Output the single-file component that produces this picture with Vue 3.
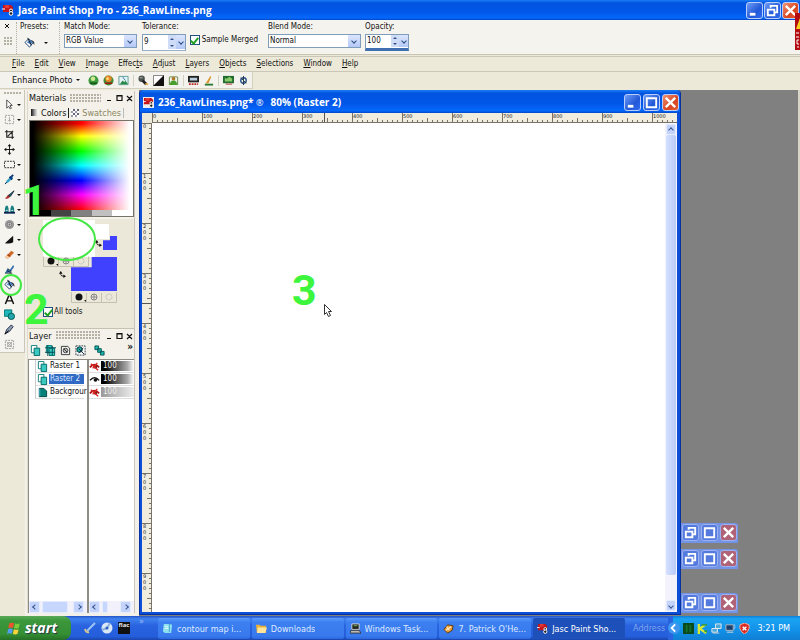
<script setup>
import { ref } from 'vue'

const menus = ['File', 'Edit', 'View', 'Image', 'Effects', 'Adjust', 'Layers', 'Objects', 'Selections', 'Window', 'Help']
const accel = { Effects: 5, Adjust: 0 }
const menuParts = menus.map((m) => {
  const i = accel[m] ?? 0
  return { name: m, a: m.slice(0, i), u: m[i], b: m.slice(i + 1) }
})

const matchMode = ref('RGB Value')
const blendMode = ref('Normal')
const tolerance = ref('9')
const opacity = ref('100')
const sampleMerged = ref(true)
const allTools = ref(true)

const layerShape = (front, back) =>
  `<path d="M1.5 .5h6v8h-6z" fill="${back}" stroke="#087a78"/><path d="M4.5 3.5h6v8h-6z" fill="${front}" stroke="#066"/>`

const icons = {
  logo: '<path d="M1 1h8l2 2v5H1z" fill="#c3151b"/><path d="M0 5h3" stroke="#fff"/><path d="M3 1h4v3H3z" fill="#e43a35"/><circle cx="9" cy="6.500" r="1.500" fill="#222" stroke="#fff"/><circle cx="9" cy="9.500" r="1.800" fill="#222" stroke="#fff"/>',
  bucket: '<path d="M1 6l4-4 5 4-4 5z" fill="#fff" stroke="#123a6e"/><path d="M3 6l3-3 4 3-3 2z" fill="#4c86c8"/><path d="M4 1l4 8M8 4q3 0 3 4" fill="none" stroke="#111"/>',
  arrow: '<path d="M3 1v9l2-2 2 3 1-1-1.500-3H9z" fill="#fff" stroke="#444"/>',
  deform: '<path d="M1.500 1.500h9v9h-9z" fill="none" stroke="#999" stroke-dasharray="2 1"/><path d="M6 3v5M4.500 6.500L6 8l1.500-1.500" fill="none" stroke="#aaa"/>',
  crop: '<path d="M3 1v8h8M1 3h8v8M4 8l6-6" fill="none" stroke="#222" stroke-width="1.200"/>',
  move: '<path d="M6 1v10M1 6h10" stroke="#111"/><path d="M6 0l2 2.500H4zM6 12l2-2.500H4zM0 6l2.500-2v4zM12 6L9.500 4v4z" fill="#111"/>',
  marquee: '<path d="M.5 2.500h11v7H.5z" fill="none" stroke="#222" stroke-dasharray="2 1"/>',
  dropper: '<path d="M1 11l2-4 5-5 2 2-5 5z" fill="#36a3c4"/><path d="M6 3l3 3M7 4l3-3" stroke="#113a7c" stroke-width="2"/><path d="M1 11l2-2" stroke="#114"/>',
  brush: '<path d="M1 10q4 2 6-2L4.500 6Q3 9 1 10z" fill="#a33"/><path d="M5 7l6-5-4 6z" fill="#187d88" stroke="#123"/>',
  clone: '<path d="M1 10V5l1-3h2l1 3v5zM7 10V5l1-3h2l1 3v5z" fill="#167f81"/><path d="M0 9.500h12" stroke="#125" stroke-width="2"/><path d="M2 7h2M8 7h2" stroke="#eee"/>',
  target: '<circle cx="6" cy="6" r="5" fill="#999"/><circle cx="6" cy="6" r="2.500" fill="#ccc" stroke="#777"/><circle cx="6" cy="6" r="1" fill="#666"/>',
  dodge: '<path d="M1 10l9-8v7q-3 2-9 1z" fill="#111"/>',
  eraser: '<path d="M1 9l7-7 3 2-7 7z" fill="#d06a2b"/><path d="M1 9l3 2 2-2-3-2z" fill="#f5cfaa"/><path d="M4 6l3 2" stroke="#8a3011"/>',
  picture: '<path d="M1 10l3-5 2 2 4-6 1 2-4 6z" fill="#2f6dab"/><path d="M3 7l5 3M4 5l4 3" stroke="#123"/><path d="M1 10h8" stroke="#244"/>',
  text: '<path d="M1.500 11L5.500 1h1l4 10M3 7.500h6" fill="none" stroke="#111" stroke-width="1.600"/>',
  shapes: '<path d="M.5 1h8v7h-8z" fill="#21b8bb" stroke="#077"/><circle cx="8" cy="8" r="3.500" fill="#22a6a8" stroke="#055"/>',
  pen: '<path d="M1 11l2-5 5-5 2 2-4 5z" fill="#8ba2b5" stroke="#224"/><path d="M1 11l4-4" stroke="#111"/>',
  object: '<path d="M1.500 1.500h9v9h-9z" fill="none" stroke="#999" stroke-dasharray="2 1"/><path d="M3 3l6 6M9 3L3 9M4 4h4v4H4z" fill="none" stroke="#aaa"/>',
  layer: layerShape('#39c9bf', '#fff'),
  layerBack: '<path d="M2.500 1.500h5l3 3v6h-8z" fill="#078078" stroke="#044"/><path d="M3 2v8" stroke="#4bc"/>',
  layerDelete: layerShape('#39c9bf', '#39c9bf') + '<path d="M0 3h12M3 0v12M0 8h11M8 1v10" stroke="#064f55"/>',
  mask: '<path d="M1.500 1.500h7l2 2v7h-9z" fill="#eee" stroke="#333"/><circle cx="6" cy="6" r="2.500" fill="#bbb" stroke="#444"/><path d="M4 4l4 4" stroke="#333"/>',
  layerEdit: '<path d="M1 1h10v10H1z" fill="#fff" stroke="#234" stroke-dasharray="2 1"/><circle cx="5" cy="5" r="3" fill="#25afa9" stroke="#033"/><path d="M4 4l6 6M9 3L4 9" stroke="#123"/>',
  layerLink: '<path d="M1 1h4v4H1zM4 4h4v4H4zM7 7h4v4H7z" fill="#1fb2a8" stroke="#055"/>',
  eye: '<path d="M1 7q5-6 10 0" fill="none" stroke="#111" stroke-width="1.500"/><circle cx="7" cy="6.500" r="2" fill="#111"/>',
  eyeOff: '<path d="M1 7q5-6 10 0" fill="none" stroke="#a11" stroke-width="2"/><circle cx="7" cy="6.500" r="2" fill="#722"/><path d="M2 3l8 7M9 2L4 8" stroke="#d22" stroke-width="1.500"/>',
  ball: '<circle cx="6" cy="6" r="5.500" fill="#3c9a3c"/><circle cx="5.500" cy="4" r="2.500" fill="#d0e896"/><path d="M2 9h8" stroke="#175c1c" stroke-width="2"/>',
  ballRed: '<circle cx="6" cy="6" r="5.500" fill="#3f8a34"/><circle cx="6" cy="4" r="3.500" fill="#e8862c"/><circle cx="5" cy="4" r="1.500" fill="#ffe06a"/><path d="M2 9h8" stroke="#a11" stroke-width="1.500"/>',
  photo: '<path d="M1 1.500h10v9H1z" fill="#e4f3f5" stroke="#5b9a91"/><path d="M2 10l3-4 2 2 1-2 3 4z" fill="#278a45"/><path d="M5 2l3 4" stroke="#37a"/>',
  clean: '<circle cx="4" cy="4" r="3.500" fill="#4b5550"/><path d="M5 6l4 4" stroke="#222" stroke-width="3"/><path d="M8 9h3v2H8z" fill="#e5b34f"/><path d="M2 3h3" stroke="#bbb"/>',
  contrast: '<path d="M.5 .5h11v11H.5z" fill="#fff" stroke="#777"/><path d="M12 0v12H0z" fill="#111"/>',
  person: '<path d="M1.500 11V2M10.500 11V2M2 2h8" fill="none" stroke="#5d8a43"/><circle cx="6" cy="4" r="2" fill="#b07c2a"/><path d="M2 11q0-5 4-5t4 5z" fill="#4a9e2b"/>',
  film: '<path d="M0 1h12v7H0z" fill="#222"/><path d="M2 3h8v3H2z" fill="#bcd"/><path d="M1 10h10" stroke="#b22" stroke-width="2" stroke-dasharray="2 1"/>',
  sharpen: '<path d="M3 9l5-8 1 1-3 7z" fill="#d9972c"/><path d="M2 10.500h9" stroke="#2a7a32" stroke-width="2"/>',
  landscape: '<path d="M0 1h12v8H0z" fill="#236c2f"/><path d="M2 3l2 1 3-2 3 2v3H2z" fill="#88c96a"/><path d="M3 10h7" stroke="#b33"/>',
  gear: '<circle cx="6" cy="6" r="3" fill="none" stroke="#26538b" stroke-width="1.500"/><path d="M6 1v10M3 3l6 6" stroke="#234"/>',
  flag: '<path d="M2 2q3-1 4 0L5 6Q3 5 1 6z" fill="#f0542c"/><path d="M7 2q2 1 4 0l-1 4q-2 1-4 0z" fill="#7ccb3a"/><path d="M1 7q2-1 4 0l-1 4q-2-1-4 0z" fill="#4f9cf0"/><path d="M6 7q2 1 4 0l-1 4q-2 1-4 0z" fill="#fbd33c"/>',
  check: '<path d="M3 9l8-8" fill="none" stroke="#9fc6f5" stroke-width="2"/><path d="M1 7q1 4 4 3" fill="none" stroke="#d3c38f" stroke-width="2"/>',
  disc: '<circle cx="6" cy="6" r="5.500" fill="#d8e6f5"/><path d="M6 6L9 1M6 6l-5 2" stroke="#8eb2dd" stroke-width="2"/><circle cx="6" cy="6" r="1.500" fill="#2b62c0"/>',
  note: '<path d="M2 1h6l3 1-1 9H3L1 9z" fill="#8fe0ef"/><path d="M8 1v9" stroke="#3aa0c8"/><path d="M3 4h4M3 6h4" stroke="#e6fbff"/>',
  folder: '<path d="M0 2h4l1 1h6v8H1z" fill="#e8b13a"/><path d="M2 5h10l-2 6H1z" fill="#ffe59a"/>',
  computer: '<path d="M2 1h8v6H2z" fill="#222" stroke="#ddd"/><path d="M4 3h4" stroke="#7c6"/><path d="M1 8h9l2 3H0z" fill="#bbb" stroke="#333"/>',
  globe: '<path d="M1 7l4-5 6 1-1 5-5 3z" fill="#e9962a" stroke="#5c3a16"/><path d="M3 8l6-4M4 4l3 4" stroke="#ffe5b5" stroke-width="1.500"/>',
  meter: '<path d="M0 0h12v12H0z" fill="#0a4a1d"/><path d="M3 2h2v8H3zM7 2h2v8H7z" fill="#15712c"/>',
  kay: '<path d="M2 1v11M9 2L3 6l7 5" fill="none" stroke="#d9e935" stroke-width="2.500"/><path d="M5 2h6M8 9h3" stroke="#369b49" stroke-width="2"/>',
  network: '<path d="M5 1h6v5H5zM1 6h6v4H1z" fill="#48a8d8" stroke="#eee"/><path d="M2 11h7" stroke="#ccc"/>',
  monitor: '<path d="M1 2h8v6H1z" fill="#1b4070" stroke="#bbb"/><path d="M2 10h7" stroke="#ddd"/><path d="M10 1q2 3 0 6" fill="none" stroke="#8cc6ff"/>',
  shield: '<path d="M6 0l5 2v4q-1 4-5 6-4-2-5-6V2z" fill="#d92b22" stroke="#f7b0a0"/><path d="M4 4l4 4M8 4L4 8" stroke="#fff" stroke-width="1.500"/>',
}

const enhance = [['ball', 'ballRed', 'photo'], ['clean', 'contrast', 'person'], ['film', 'sharpen'], ['landscape', 'gear']]
const tools = [
  ['arrow', true], ['deform', true], ['crop'], ['move'], ['marquee', true], ['dropper', true], ['brush', true],
  ['clone', true], ['target', true], ['dodge', true], ['eraser', true], ['picture'], ['bucket'], ['text'],
  ['shapes'], ['pen'], ['object'],
]
const layerTools = ['layer', 'layerDelete', 'mask', 'layerEdit', 'layerLink']
const layers = [
  { name: 'Raster 1', icon: 'layer', eye: 'eyeOff', opacity: '100' },
  { name: 'Raster 2', icon: 'layer', eye: 'eye', opacity: '100', selected: true },
  { name: 'Backgrour', icon: 'layerBack', eye: 'eyeOff', opacity: '100', locked: true },
]
const tasks = [
  { text: 'contour map i...', icon: 'note' },
  { text: 'Downloads', icon: 'folder' },
  { text: 'Windows Task...', icon: 'computer' },
  { text: "7. Patrick O'He...", icon: 'globe' },
  { text: 'Jasc Paint Sho...', icon: 'logo', active: true },
]
const tray = ['meter', 'kay', 'network', 'monitor', 'shield']
const ticks = Array.from({ length: 105 }, (_, i) => ({ at: i * 5, len: i % 10 === 0 ? 10 : i % 5 === 0 ? 5 : 3 }))
const marks = Array.from({ length: 11 }, (_, i) => ({ at: i * 50, label: String(i * 100) }))
const minimized = ['a', 'b', 'c']
</script>

<template>
  <div class="app">
    <header class="titlebar">
      <svg class="icon big" viewBox="0 0 12 12" v-html="icons.logo"></svg>
      <h1>Jasc Paint Shop Pro - 236_RawLines.png</h1>
      <div class="winbtns">
        <button class="wb" aria-label="Minimize"><svg viewBox="0 0 16 16"><path d="M3 12h6" stroke="#fff" stroke-width="3" /></svg></button>
        <button class="wb" aria-label="Restore"><svg viewBox="0 0 16 16"><path d="M6 5V3h7v7h-2M3 7h7v6H3z" fill="none" stroke="#fff" stroke-width="2" /></svg></button>
        <button class="wb close" aria-label="Close"><svg viewBox="0 0 16 16"><path d="M3 3l10 10M13 3L3 13" stroke="#fff" stroke-width="2.500" /></svg></button>
      </div>
    </header>

    <section class="options">
      <div class="grab"><button class="plain" aria-label="Close palette"><svg class="tiny" viewBox="0 0 6 6"><path d="M1 1l4 4M5 1L1 5" stroke="#111" /></svg></button><span class="dots"></span></div>
      <div class="field presets">
        <span>Presets:</span>
        <button class="plain preset" aria-label="Presets"><svg class="icon" viewBox="0 0 12 12" v-html="icons.bucket"></svg><i class="caret"></i></button>
      </div>
      <div class="field match">
        <label for="mm">Match Mode:</label>
        <div class="combo"><select id="mm" v-model="matchMode"><option>RGB Value</option></select><span class="drop"><i class="chev"></i></span></div>
      </div>
      <div class="field num">
        <label for="tol">Tolerance:</label>
        <div class="spin low"><input id="tol" v-model="tolerance" type="text"><span class="updown"><i class="up"></i><i class="down"></i></span><span class="drop"><i class="chev"></i></span></div>
      </div>
      <label class="tick merged"><input v-model="sampleMerged" type="checkbox">Sample Merged</label>
      <div class="field blend">
        <label for="bm">Blend Mode:</label>
        <div class="combo"><select id="bm" v-model="blendMode"><option>Normal</option></select><span class="drop"><i class="chev"></i></span></div>
      </div>
      <div class="field num">
        <label for="op">Opacity:</label>
        <div class="spin"><input id="op" v-model="opacity" type="text"><span class="updown"><i class="up"></i><i class="down"></i></span><span class="drop"><i class="chev"></i></span></div>
      </div>
    </section>

    <nav class="menubar">
      <button v-for="m in menuParts" :key="m.name" class="plain">{{ m.a }}<u>{{ m.u }}</u>{{ m.b }}</button>
    </nav>

    <div class="toolbar">
      <div class="strip">
        <button class="plain enhance">Enhance Photo<i class="caret"></i></button>
        <div v-for="(g, i) in enhance" :key="i" class="group">
          <button v-for="n in g" :key="n" class="plain" :aria-label="n"><svg class="icon" viewBox="0 0 12 12" v-html="icons[n]"></svg></button>
        </div>
      </div>
    </div>

    <main class="work">
      <aside class="toolbox">
        <span class="dots"></span>
        <button v-for="t in tools" :key="t[0]" class="plain tool" :aria-label="t[0]">
          <svg class="icon" viewBox="0 0 12 12" v-html="icons[t[0]]"></svg><i v-if="t[1]" class="caret"></i>
        </button>
      </aside>

      <aside class="panels">
        <section class="panel">
          <header class="phead">
            <h2>Materials</h2><span class="dots"></span>
            <svg class="pctl" viewBox="0 0 28 8"><path d="M2 6.500h4M12 1.500h5v5h-5zM11.500 2h6M22 2l5 5M27 2l-5 5" fill="none" stroke="#111" stroke-width="1.200" /></svg>
          </header>
          <div class="tabs">
            <button class="plain tab on"><i class="tone"></i>Colors</button>
            <button class="plain tab"><i class="checker"></i>Swatches</button>
          </div>
          <div class="rainbow"><div class="hues"></div><div class="greys"><i></i><i></i><i></i><i></i></div></div>
          <div class="swatches">
            <button class="sw fore" aria-label="Foreground material"></button>
            <button class="sw minifore" aria-label="Foreground color"></button>
            <button class="sw miniback" aria-label="Background color"></button>
            <button class="sw back" aria-label="Background material"></button>
            <svg class="swap one" viewBox="0 0 8 8"><path d="M2 1v3q0 2 4 2" fill="none" stroke="#111" /><path d="M0 3l2-3 2 3zM5 4l3 2-3 2z" fill="#111" /></svg>
            <svg class="swap two" viewBox="0 0 8 8"><path d="M2 1v3q0 2 4 2" fill="none" stroke="#111" /><path d="M0 3l2-3 2 3zM5 4l3 2-3 2z" fill="#111" /></svg>
            <svg v-for="n in ['first', 'second']" :key="n" class="modes" :class="n" viewBox="0 0 46 11">
              <path d="M.5 .5v10h45V.5M15.500 1v9M30.500 1v9" fill="none" stroke="#c3bfb1" />
              <circle cx="8" cy="5" r="3.500" fill="#111" /><path d="M13 8h2v2z" fill="#111" />
              <circle cx="23" cy="5" r="3" fill="none" stroke="#888" /><path d="M23 2v6M20 5h6" stroke="#888" />
              <circle cx="38" cy="5" r="3" fill="none" stroke="#bbb" stroke-dasharray="2 1" />
            </svg>
          </div>
          <label class="tick all"><input v-model="allTools" type="checkbox">All tools</label>
        </section>

        <section class="panel layers">
          <header class="phead">
            <h2>Layer</h2><span class="dots"></span>
            <svg class="pctl" viewBox="0 0 28 8"><path d="M2 6.500h4M12 1.500h5v5h-5zM11.500 2h6M22 2l5 5M27 2l-5 5" fill="none" stroke="#111" stroke-width="1.200" /></svg>
          </header>
          <div class="ltools">
            <button v-for="n in layerTools" :key="n" class="plain" :aria-label="n"><svg class="icon" viewBox="0 0 12 12" v-html="icons[n]"></svg></button>
            <b>»</b>
          </div>
          <div class="panes">
            <div class="pane names">
              <ul>
                <li v-for="l in layers" :key="l.name"><svg class="icon" viewBox="0 0 12 12" v-html="icons[l.icon]"></svg><span :class="{ sel: l.selected }">{{ l.name }}</span></li>
              </ul>
              <div class="hscroll"><i class="arr left"></i><i class="thumb"></i><i class="arr right"></i></div>
            </div>
            <div class="pane vis">
              <ul>
                <li v-for="l in layers" :key="l.name"><svg class="icon" viewBox="0 0 12 12" v-html="icons[l.eye]"></svg><span class="op" :class="{ locked: l.locked }">{{ l.opacity }}</span></li>
              </ul>
              <div class="hscroll"><i class="arr left"></i><i class="thumb small"></i><i class="arr right"></i></div>
            </div>
          </div>
        </section>
      </aside>

      <section class="mdi">
        <article class="doc">
          <header class="titlebar dochead">
            <svg class="icon" viewBox="0 0 12 12"><path d="M0 0h12v12H0z" fill="#eee" /><g v-html="icons.logo"></g></svg>
            <h2>236_RawLines.png* <small>®</small></h2><h2 class="zoom">80% (Raster 2)</h2>
            <div class="winbtns">
              <button class="wb" aria-label="Minimize"><svg viewBox="0 0 16 16"><path d="M3 12h6" stroke="#fff" stroke-width="3" /></svg></button>
              <button class="wb" aria-label="Maximize"><svg viewBox="0 0 16 16"><path d="M2 3.500h12M3 4v9h10V4" fill="none" stroke="#fff" stroke-width="2" /></svg></button>
              <button class="wb close" aria-label="Close"><svg viewBox="0 0 16 16"><path d="M3 3l10 10M13 3L3 13" stroke="#fff" stroke-width="2.500" /></svg></button>
            </div>
          </header>
          <div class="view">
            <span class="corner"></span>
            <svg class="hruler">
              <path v-for="t in ticks" :key="t.at" :d="`M${t.at + 0.5} 10v-${t.len}`" stroke="#77736a" />
              <path d="M172.500 0v10" stroke="#555" />
              <text v-for="m in marks" :key="m.at" :x="m.at + 1" y="5">{{ m.label }}</text>
            </svg>
            <svg class="vruler">
              <path v-for="t in ticks" :key="t.at" :d="`M10 ${t.at + 0.5}h-${t.len}`" stroke="#77736a" />
              <path d="M0 180.500h10" stroke="#555" />
              <g v-for="m in marks.slice(0, 10)" :key="m.at">
                <text v-for="(c, k) in m.label.split('')" :key="k" x="1" :y="m.at + 5 + k * 6">{{ c }}</text>
              </g>
            </svg>
            <div class="canvas"></div>
            <div class="vscroll"><i class="arr top"></i><i class="vthumb"></i><span></span><i class="arr bottom"></i></div>
          </div>
        </article>
        <div v-for="m in minimized" :key="m" class="mini" :class="m">
          <button class="wb" aria-label="Restore"><svg viewBox="0 0 16 16"><path d="M6 5V3h7v7h-2M3 7h7v6H3z" fill="none" stroke="#fff" stroke-width="2" /></svg></button>
          <button class="wb" aria-label="Maximize"><svg viewBox="0 0 16 16"><path d="M2 3.500h12M3 4v9h10V4" fill="none" stroke="#fff" stroke-width="2" /></svg></button>
          <button class="wb close" aria-label="Close"><svg viewBox="0 0 16 16"><path d="M3 3l10 10M13 3L3 13" stroke="#fff" stroke-width="2.500" /></svg></button>
        </div>
      </section>
    </main>

    <footer class="taskbar">
      <button class="start"><svg viewBox="0 0 12 12" v-html="icons.flag"></svg>start</button>
      <div class="quick">
        <svg class="icon big" viewBox="0 0 12 12" v-html="icons.check"></svg>
        <svg class="icon big" viewBox="0 0 12 12" v-html="icons.disc"></svg>
        <span class="flac">flac</span>
        <span class="more">»</span>
      </div>
      <div class="tasks">
        <button v-for="t in tasks" :key="t.text" class="task" :class="{ active: t.active }"><svg class="icon" viewBox="0 0 12 12" v-html="icons[t.icon]"></svg><span>{{ t.text }}</span></button>
      </div>
      <span class="address">Address</span>
      <div class="tray">
        <button class="hide" aria-label="Hide icons"><svg viewBox="0 0 10 10"><path d="M6 2L3 5l3 3" fill="none" stroke="#fff" stroke-width="1.500" /></svg></button>
        <svg v-for="n in tray" :key="n" class="icon" viewBox="0 0 12 12" v-html="icons[n]"></svg>
        <time>3:21 PM</time>
      </div>
    </footer>

    <svg class="notes" width="800" height="640" viewBox="0 0 800 640">
      <ellipse cx="67" cy="239" rx="28" ry="21" />
      <ellipse cx="11" cy="285" rx="10" ry="10" />
      <text x="22" y="215">1</text>
      <text x="24" y="324">2</text>
      <text x="292" y="305">3</text>
      <path d="M324.500 304.500v10l2-2 2 4 2-1-2-4h3z" fill="#fff" stroke="#333" />
    </svg>
    <svg class="badge" viewBox="0 0 5 37"><path d="M0 0h5v37H0z" fill="#b30d12" /><path d="M5 5L1 16h4z" fill="#f8d21c" /><path d="M1 20h3M1 24h3M4 27H2v4h2M2 34h2" fill="none" stroke="#fff" /></svg>
  </div>
</template>

<style>
html, body { margin: 0; background: #ece9d8; }
</style>

<style scoped>
* { box-sizing: border-box; }
.app { position: relative; display: flex; flex-direction: column; height: 100vh; overflow: hidden; background: #ece9d8; color: #111; font: 8px/10px "DejaVu Sans Condensed", "DejaVu Sans", sans-serif; }
button, input, select { font: inherit; color: inherit; }
.plain { display: flex; align-items: center; padding: 0; border: 0; background: none; }
h1, h2 { margin: 0; font-weight: normal; }
.icon { flex: none; display: block; width: 11px; height: 11px; overflow: hidden; }
.icon.big { width: 12px; height: 12px; }
.caret { width: 0; height: 0; border: 2px solid transparent; border-top-color: #111; border-bottom: 0; }
.dots { background: radial-gradient(circle at 1px 1px, #b5b1a5 1px, transparent 1px) 0 0 / 3px 3px; }

.titlebar { display: flex; align-items: center; flex: none; height: 20px; padding: 0 1px 0 2px; gap: 4px; background: linear-gradient(#1b7df5, #0253e0 15%, #0257e9 60%, #0468fc 90%, #0346c4); color: #fff; }
.titlebar h1, .titlebar h2 { font: bold 10px/14px "Open Sans", sans-serif; white-space: pre; }
.winbtns { display: flex; gap: 1px; margin-left: auto; }
.wb { width: 17px; height: 17px; padding: 0; border: 1px solid #b9cffa; border-radius: 3px; background: linear-gradient(135deg, #6f9cf5, #2258d8 60%, #2e6cf0); }
.wb svg { display: block; width: 15px; height: 15px; }
.wb.close { background: linear-gradient(135deg, #f09478, #d8451f 60%, #e45e33); }

.options { display: flex; flex: none; height: 35px; padding: 2px 4px 0; background: #f5f3ee; border-bottom: 1px solid #c8c4b4; }
.grab { display: flex; flex-direction: column; gap: 8px; width: 12px; padding-top: 1px; }
.grab .dots { width: 8px; height: 9px; }
.tiny { width: 6px; height: 6px; }
.field { display: flex; flex-direction: column; gap: 2px; }
.presets { width: 43px; gap: 5px; padding-left: 3px; border-left: 1px dotted #b3afa2; }
.preset { gap: 9px; padding-left: 4px; }
.match { width: 83px; padding: 0 5px 0 4px; border-left: 1px dotted #b3afa2; }
.num { width: 46px; }
.blend { width: 97px; padding-right: 4px; margin-left: 10px; }
.field label { white-space: nowrap; }
.combo, .spin { display: flex; width: 100%; height: 14px; border: 1px solid #7f9db9; background: #fff; }
.spin { height: 17px; width: 44px; border-bottom: 3px solid #3f6fae; padding-bottom: 1px; }
.spin.low { border-bottom: 1px solid #9ab2cc; }
.combo select, .spin input { flex: 1; min-width: 0; width: 0; padding: 0 1px; border: 0; background: transparent; appearance: none; outline: 0; }
.drop { display: grid; place-items: center; width: 12px; background: linear-gradient(#dbe6fd, #b3c8f6); }
.spin .drop { width: 9px; }
.chev { width: 4px; height: 4px; border: solid #2b4a80; border-width: 0 1px 1px 0; transform: rotate(45deg); }
.updown { display: flex; flex-direction: column; justify-content: space-around; align-items: center; width: 8px; background: #cfdcf8; }
.up, .down { border: 2px solid transparent; }
.up { border-top: 0; border-bottom-color: #345289; }
.down { border-bottom: 0; border-top-color: #345289; }
.tick { display: flex; align-items: center; gap: 2px; white-space: nowrap; }
.tick input { display: grid; place-items: center; appearance: none; margin: 0; width: 10px; height: 10px; border: 1px solid #1f5080; background: #fff; }
.tick input:checked::after { content: ""; width: 3px; height: 6px; border: solid #21a121; border-width: 0 2px 2px 0; transform: rotate(40deg); }
.merged { height: 35px; padding-left: 2px; width: 70px; }

.menubar { display: flex; flex: none; gap: 10px; height: 16px; margin-top: 1px; padding-left: 12px; border: solid #cbc7b8; border-width: 1px 0; }
.toolbar { flex: none; height: 18px; }
.strip { display: flex; align-items: center; width: 253px; height: 17px; padding-left: 12px; background: #f4f2ec; border-right: 1px solid #d4d0c0; border-bottom: 1px solid #d4d0c0; }
.enhance { gap: 3px; margin-right: 4px; font-size: 9px; white-space: nowrap; }
.group { display: flex; gap: 4px; padding: 0 4px; border-right: 1px solid #d3cfc2; }
.group:last-child { border: 0; }

.work { display: flex; flex: 1; min-height: 0; }
.toolbox { display: flex; flex: none; flex-direction: column; align-self: flex-start; width: 25px; height: 263px; padding: 2px 0 0 4px; background: #f6f4ef; border-right: 1px solid #cbc7b8; border-bottom: 1px solid #cbc7b8; }
.toolbox > .dots { width: 18px; height: 3px; margin-bottom: 2px; }
.tool { gap: 2px; height: 15px; }
.panels { display: flex; flex: none; flex-direction: column; width: 114px; padding: 1px 4px 3px 2px; background: #f2f0e8; }
.panel { display: flex; flex-direction: column; height: 238px; border-right: 1px solid #c9c5b8; border-left: 1px solid #dcd8ca; background: #f3f1ea; }
.phead { display: flex; align-items: center; gap: 4px; height: 14px; padding: 0 1px; }
.phead h2 { font-size: 9px; }
.phead .dots { flex: 1; height: 9px; }
.pctl { width: 28px; height: 8px; }
.tabs { display: flex; align-items: center; height: 15px; padding-left: 3px; }
.tab { gap: 3px; height: 10px; padding-right: 2px; border-right: 1px solid #bbb; color: #8c8762; font-size: 9px; }
.tab.on { padding-right: 2px; border-color: #222; color: #111; }
.tab + .tab { padding-left: 2px; }
.tone { width: 7px; height: 7px; background: linear-gradient(90deg, #111, #999, #fff); }
.checker { width: 8px; height: 8px; background: conic-gradient(#667 25%, #fff 0 50%, #99a 0 75%, #fff 0) 0 0 / 4px 4px; }
.rainbow { height: 97px; margin: 0 0 0 1px; border: 1px solid #77746a; }
.hues { height: 89px; background: linear-gradient(90deg, #000 3%, rgba(0, 0, 0, 0) 50%, rgba(255, 255, 255, 0) 50%, #fff 97%), linear-gradient(#f00 3%, #ff0 17%, #0f0 34%, #0ff 50%, #00f 67%, #f0f 83%, #f00); }
.greys { display: grid; grid-template-columns: 1fr 1fr 1fr 1fr 1fr; height: 6px; background: #000; }
.greys i:nth-child(1) { grid-column: 2; background: #444; }
.greys i:nth-child(2) { background: #808080; }
.greys i:nth-child(3) { background: #c0c0c0; }
.greys i:nth-child(4) { background: #fff; }
.swatches { position: relative; height: 87px; margin-top: 2px; background: #ece8d9; }
.sw { position: absolute; padding: 0; border: 0; }
.fore { left: 15px; top: 1px; width: 52px; height: 37px; background: #fff; }
.minifore { left: 66px; top: 5px; width: 15px; height: 15px; background: #fff; }
.miniback { left: 75px; top: 17px; width: 14px; height: 14px; background: #4040ff; clip-path: polygon(50% 0, 100% 0, 100% 100%, 0 100%, 0 30%, 50% 30%); }
.back { left: 43px; top: 38px; width: 46px; height: 34px; background: #4040ff; clip-path: polygon(45% 0, 100% 0, 100% 100%, 0 100%, 0 30%, 45% 30%); }
.swap { position: absolute; width: 7px; height: 7px; }
.swap.one { left: 67px; top: 21px; }
.swap.two { left: 31px; top: 52px; }
.modes { position: absolute; width: 46px; height: 11px; }
.modes.first { left: 15px; top: 37px; }
.modes.second { left: 43px; top: 73px; }
.all { flex: 1; gap: 1px; padding: 0 0 10px 15px; background: #ece8d9; border-bottom: 1px solid #c6c2b2; }
.layers { flex: 1; min-height: 0; height: auto; }
.layers .phead { height: 13px; }
.ltools { display: flex; align-items: center; gap: 4px; height: 17px; padding: 0 1px 0 2px; }
.ltools button:nth-child(5) { margin-left: 4px; }
.ltools b { align-self: flex-start; margin-left: auto; font-size: 10px; }
.panes { display: grid; grid-template-columns: 60px 1fr; flex: 1; min-height: 0; }
.pane { display: flex; flex-direction: column; min-width: 0; background: #fff; border: solid #8f8c84; border-width: 1px 1px 0; }
.pane.vis { border-right: 0; }
ul { flex: 1; margin: 0; padding: 0; list-style: none; overflow: hidden; }
li { display: flex; align-items: center; gap: 1px; height: 13px; border-bottom: 1px solid #ddd; white-space: nowrap; }
.names li { margin: 0 3px 0 6px; border-left: 1px solid #ccc; padding-left: 1px; }
.names span { flex: 1; padding: 0 1px; }
.sel { background: #316ac5; color: #dce9ff; }
.op { flex: 1; padding-left: 2px; background: linear-gradient(90deg, #000 10%, #aaa 80%, #fff); color: #eee; }
.op.locked { background: linear-gradient(90deg, #999, #eee); }
.hscroll { display: flex; gap: 2px; height: 12px; padding-right: 3px; background: #f2f1fb; }
.arr { display: grid; place-items: center; width: 11px; flex: none; border: 1px solid #e3ebfe; border-radius: 2px; background: #c3d3fb; }
.arr::after { content: ""; width: 3px; height: 3px; border: solid #35538c; border-width: 1px 0 0 1px; }
.left::after { transform: rotate(-45deg); }
.right::after { transform: rotate(135deg); }
.top::after { transform: rotate(45deg); }
.bottom::after { transform: rotate(225deg); }
.thumb { flex: none; width: 26px; border: 1px solid #e3ebfe; border-radius: 2px; background: #c6d6fc; }
.thumb.small { width: 6px; }
.right { margin-left: auto; }

.mdi { position: relative; flex: 1; min-width: 0; background: #808080; border-right: 2px solid #d8d5c9; padding-bottom: 1px; overflow: hidden; }
.doc { display: flex; flex-direction: column; width: calc(100% - 117px); height: 100%; padding: 0 3px 2px 2px; background: #0b4fd8; border: solid #0831a0; border-width: 0 1px 1px; border-radius: 4px 4px 0 0; }
.dochead { height: 23px; margin: 0 -3px 0 -2px; padding: 1px 1px 0 3px; border-radius: 4px 4px 0 0; }
.dochead small { font: 9px "Open Sans", sans-serif; }
.dochead .zoom { margin-left: 3px; }
.dochead .winbtns { gap: 2px; }
.view { flex: 1; min-height: 0; display: grid; grid-template: 10px 1fr / 10px 1fr 12px; background: #ece8d9; }
.view > svg { display: block; width: 100%; height: 100%; overflow: hidden; min-height: 0; background: #f0ecde; }
.view text { font: 5px "DejaVu Sans", sans-serif; fill: #222; }
.hruler { grid-column: 2 / 4; border-bottom: 1px solid #77736a; }
.vruler { border-right: 1px solid #77736a; }
.canvas { background: #fff; }
.vscroll { display: flex; flex-direction: column; background: #f4f3fc; padding: 1px; }
.vscroll .arr { width: 10px; height: 11px; }
.vthumb { flex: 435; background: linear-gradient(90deg, #d4e0ff, #b9cbf8); border-radius: 2px; }
.vscroll span { flex: 25; }
.mini { position: absolute; left: calc(100% - 117px); display: flex; gap: 2px; width: 57px; height: 20px; padding: 1px; background: #7393e6; border-radius: 0 3px 0 0; }
.mini .wb { border-color: #9cb2f0; background: #547ade; }
.mini .wb.close { background: #b06377; }
.mini.a { bottom: 73px; }
.mini.b { bottom: 47px; }
.mini.c { bottom: 3px; }

.taskbar { display: flex; flex: none; align-items: stretch; height: 24px; background: linear-gradient(#2453c8, #3f82f0 12%, #2a63df 40%, #245edb 85%, #1b45ad); color: #dfeaff; font-size: 9px; }
.start { display: flex; align-items: center; gap: 4px; width: 71px; padding: 0 0 0 7px; border: 0; border-radius: 0 8px 8px 0; background: linear-gradient(#5aaa58, #3c973b 20%, #358f35 75%, #256f26); color: #fff; font: italic bold 14px/20px "Open Sans", sans-serif; text-shadow: 1px 1px 1px #234; }
.start svg { width: 14px; height: 14px; }
.quick { display: flex; align-items: center; gap: 5px; width: 87px; padding-left: 13px; }
.flac { width: 12px; height: 12px; background: #111; color: #eee; font: bold 6px/7px "Open Sans", sans-serif; text-align: center; }
.more { align-self: flex-start; margin-left: 4px; color: #9dbcf5; }
.tasks { display: flex; gap: 2px; width: 467px; padding: 2px 0 1px; }
.task { flex: 1; min-width: 0; display: flex; align-items: center; gap: 4px; padding: 0 4px; border: 0; border-radius: 2px; background: linear-gradient(#5b9bfb, #3c7ff0 20%, #387aee 85%, #2c67dc); white-space: nowrap; }
.task span { overflow: hidden; }
.task.active { background: #1e50b9; color: #fff; }
.address { flex: 1; align-self: center; padding-left: 8px; color: #7fa5ec; }
.tray { display: flex; align-items: center; gap: 3px; width: 132px; padding-right: 10px; background: linear-gradient(90deg, #2a63df 5px, transparent 5px), linear-gradient(#0c7fd8, #1ba4f2 12%, #1290e8 60%, #0f7fd3); color: #fff; }
.hide { width: 12px; height: 12px; padding: 0; border: 0; border-radius: 6px; background: #3d97ee; }
.hide svg { display: block; }
.tray time { margin-left: auto; white-space: nowrap; }

.notes { position: absolute; left: 0; top: 0; pointer-events: none; }
.notes ellipse { fill: none; stroke: #44e844; stroke-width: 2; }
.notes text { font: bold 43px Roboto, sans-serif; fill: #3df53d; }
.badge { position: absolute; right: 0; top: 13px; width: 5px; height: 37px; }
</style>
